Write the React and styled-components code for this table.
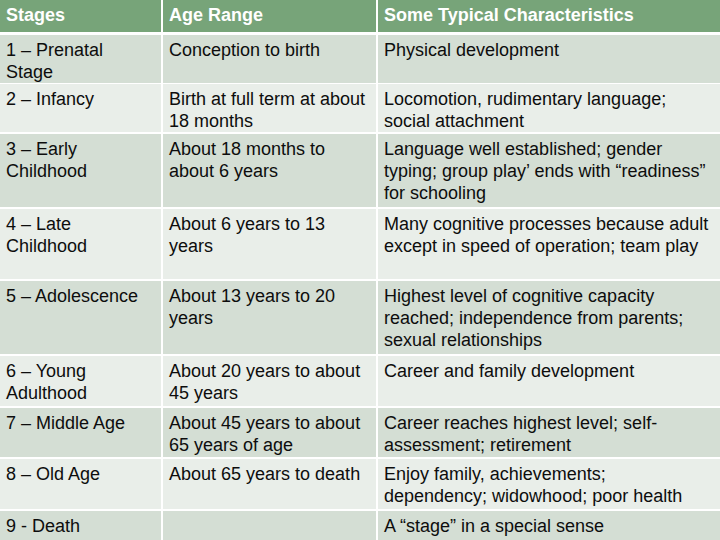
import React from 'react';
import styled, { createGlobalStyle } from 'styled-components';

const GlobalStyle = createGlobalStyle`
  html, body {
    margin: 0;
    padding: 0;
    background: #ffffff;
    overflow: hidden;
  }
  body {
    font-family: "Liberation Sans", Arial, sans-serif;
  }
`;

const Table = styled.div`
  width: 720px;
  height: 540px;
  overflow: hidden;
  display: flex;
  flex-direction: column;
  gap: 2px;
  background: #ffffff;
`;

const Row = styled.div`
  display: grid;
  grid-template-columns: 161px 213px 1fr;
  column-gap: 2px;
  height: ${p => p.$height}px;
  flex-shrink: 0;
  margin-bottom: ${p => (p.$header ? 1 : 0)}px;
`;

const Cell = styled.div`
  padding: 4px 9px 0 6px;
  font-size: 18px;
  line-height: 22px;
  color: ${p => (p.$header ? '#ffffff' : '#0d0d0d')};
  font-weight: ${p => (p.$header ? 700 : 400)};
  background: ${p => (p.$header ? '#77a479' : p.$dark ? '#d4ded4' : '#e9eee9')};
`;

const headers = ['Stages', 'Age Range', 'Some Typical Characteristics'];

const stages = [
  { stage: '1 – Prenatal Stage', age: 'Conception to birth', traits: 'Physical development', height: 47 },
  { stage: '2 – Infancy', age: 'Birth at full term at about 18 months', traits: 'Locomotion, rudimentary language; social attachment', height: 48 },
  { stage: '3 – Early Childhood', age: 'About 18 months to about 6 years', traits: 'Language well established; gender typing; group play’ ends with “readiness” for schooling', height: 73 },
  { stage: '4 – Late Childhood', age: 'About 6 years to 13 years', traits: 'Many cognitive processes because adult except in speed of operation; team play', height: 70 },
  { stage: '5 – Adolescence', age: 'About 13 years to 20 years', traits: 'Highest level of cognitive capacity reached; independence from parents; sexual relationships', height: 73 },
  { stage: '6 – Young Adulthood', age: 'About 20 years to about 45 years', traits: 'Career and family development', height: 50 },
  { stage: '7 – Middle Age', age: 'About 45 years to about 65 years of age', traits: 'Career reaches highest level; self-assessment; retirement', height: 49 },
  { stage: '8 – Old Age', age: 'About 65 years to death', traits: 'Enjoy family, achievements; dependency; widowhood; poor health', height: 50 },
  { stage: '9 - Death', age: '', traits: 'A “stage” in a special sense', height: 48 },
];

const App = () => {
  return (
    <>
      <GlobalStyle />
      <Table>
        <Row $height={32} $header>
          {headers.map(h => (
            <Cell key={h} $header>{h}</Cell>
          ))}
        </Row>
        {stages.map((s, i) => (
          <Row key={s.stage} $height={s.height}>
            <Cell $dark={i % 2 === 0}>{s.stage}</Cell>
            <Cell $dark={i % 2 === 0}>{s.age}</Cell>
            <Cell $dark={i % 2 === 0}>{s.traits}</Cell>
          </Row>
        ))}
      </Table>
    </>
  );
};

export default App;
